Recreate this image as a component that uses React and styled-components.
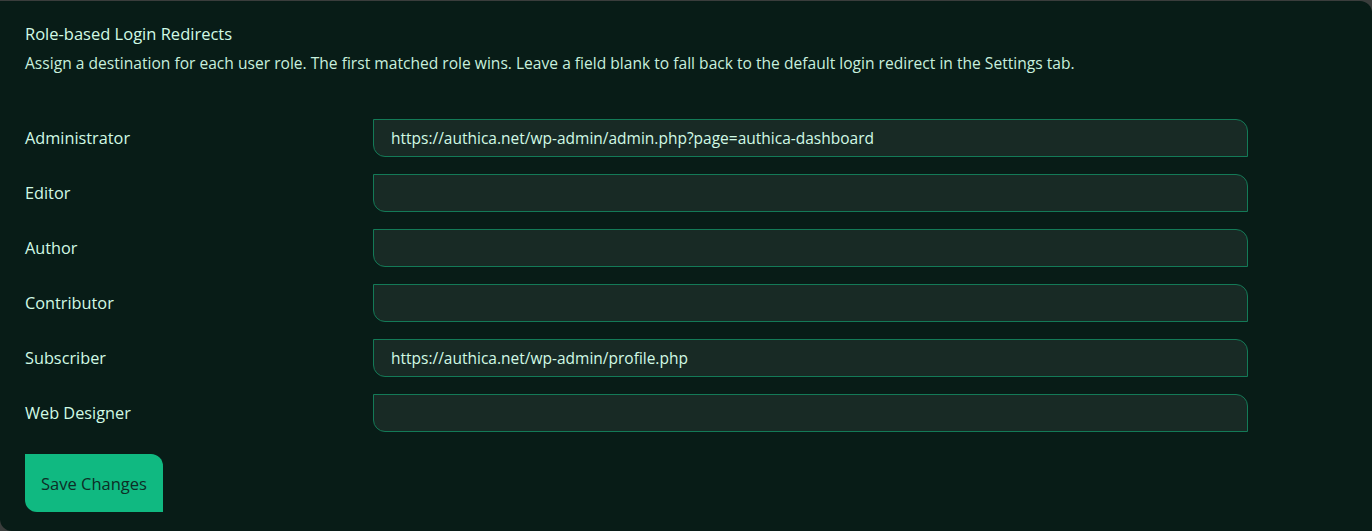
import React from "react";
import styled, { createGlobalStyle } from "styled-components";

const Global = createGlobalStyle`
  html, body { margin: 0; padding: 0; background: #3a3d3c; }
  body { font-family: "Open Sans", "Noto Sans", sans-serif; }
  * { box-sizing: border-box; }
`;

const Card = styled.section`
  margin-top: 1px;
  width: 1372px;
  height: 530px;
  background: #081c17;
  border-radius: 0 12px 0 12px;
  padding: 21px 25px 0 25px;
  color: #d1fae5;
`;

const Title = styled.h2`
  margin: 0;
  font-size: 16.5px;
  font-weight: 400;
  line-height: 24px;
  color: #d1fae5;
`;

const Desc = styled.p`
  margin: 6px 0 0 0;
  font-size: 15.6px;
  line-height: 22px;
  color: #c7efdd;
  white-space: nowrap;
`;

const Form = styled.form`
  margin-top: 45px;
  display: grid;
  grid-template-columns: 348px 875px;
  row-gap: 17px;
  align-items: center;
`;

const Label = styled.label`
  font-size: 16.3px;
  line-height: 24px;
  color: #d1fae5;
`;

const Input = styled.input`
  height: 38px;
  width: 100%;
  background: #182a25;
  border: 1px solid #137a57;
  border-radius: 0 12px 0 12px;
  padding: 0 17px;
  font-family: inherit;
  font-size: 15.5px;
  color: #d1fae5;
  outline: none;
`;

const Button = styled.button`
  margin-top: 22px;
  width: 138px;
  height: 58px;
  background: #10b981;
  border: none;
  border-radius: 0 12px 0 12px;
  font-family: inherit;
  font-size: 16.5px;
  color: #0d2e26;
  cursor: pointer;
`;

const roles = [
  ["Administrator", "https://authica.net/wp-admin/admin.php?page=authica-dashboard"],
  ["Editor", ""],
  ["Author", ""],
  ["Contributor", ""],
  ["Subscriber", "https://authica.net/wp-admin/profile.php"],
  ["Web Designer", ""],
];

export default function App() {
  return (
    <>
      <Global />
      <Card>
        <Title>Role-based Login Redirects</Title>
        <Desc>
          Assign a destination for each user role. The first matched role wins. Leave a field blank to fall back to the default login redirect in the Settings tab.
        </Desc>
        <Form onSubmit={(e) => e.preventDefault()}>
          {roles.map(([name, val]) => (
            <React.Fragment key={name}>
              <Label>{name}</Label>
              <Input defaultValue={val} />
            </React.Fragment>
          ))}
        </Form>
        <Button type="button">Save Changes</Button>
      </Card>
    </>
  );
}
